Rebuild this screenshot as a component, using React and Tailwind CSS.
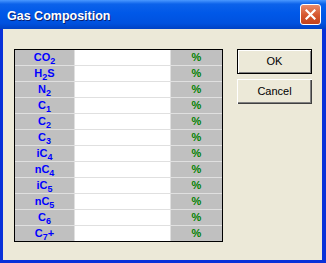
const rows = [
  { base: 'CO', sub: '2' },
  { base: 'H', sub: '2', tail: 'S' },
  { base: 'N', sub: '2' },
  { base: 'C', sub: '1' },
  { base: 'C', sub: '2' },
  { base: 'C', sub: '3' },
  { base: 'iC', sub: '4' },
  { base: 'nC', sub: '4' },
  { base: 'iC', sub: '5' },
  { base: 'nC', sub: '5' },
  { base: 'C', sub: '6' },
  { base: 'C', sub: '7', tail: '+' },
];

function Label({ base, sub, tail }) {
  return (
    <span className="text-[11px] font-bold leading-none text-[#0000ff]">
      {base}
      <sub className="text-[9px] bottom-[-3px]">{sub}</sub>
      {tail}
    </span>
  );
}

export default function App() {
  return (
    <div className="flex h-[263px] w-[326px] flex-col font-['Liberation_Sans',Arial,sans-serif]">
      <div className="flex h-[29px] shrink-0 items-center justify-between bg-[linear-gradient(to_bottom,#4a98ff_0%,#0c62ea_14%,#0058e8_45%,#0052df_80%,#0042c4_100%)] pl-[7px] pr-[5px]">
        <span className="pt-[3px] text-[12.5px] font-bold text-white [text-shadow:1px_1px_0_#0a1e6e]">
          Gas Composition
        </span>
        <button className="flex h-[21px] w-[21px] items-center justify-center rounded-[3px] border border-white bg-[linear-gradient(to_bottom,#e98a6a,#d5562e_55%,#c2421c)]">
          <svg width="11" height="11" viewBox="0 0 11 11">
            <path d="M1.5 1.5 L9.5 9.5 M9.5 1.5 L1.5 9.5" stroke="white" strokeWidth="2.2" strokeLinecap="square" />
          </svg>
        </button>
      </div>
      <div className="flex flex-1 items-start gap-[14px] border-x-[3px] border-b-[3px] border-[#0831d9] border-r-[4px] bg-[#ece9d8] pl-[11px] pt-[20px]">
        <div className="grid grid-cols-[59px_95px_51px] gap-px border border-black bg-[#e0e0e0]">
          {rows.map((r, i) => (
            <div key={i} className="contents">
              <div className="flex h-[15px] items-start justify-center bg-[#c0c0c0] pt-[2px]">
                <Label {...r} />
              </div>
              <div className="h-[15px] bg-white" />
              <div className="flex h-[15px] items-center justify-center bg-[#c0c0c0] text-[11px] font-bold text-[#008000]">
                %
              </div>
            </div>
          ))}
        </div>
        <div className="flex flex-col gap-[5px]">
          <button className="h-[25px] w-[75px] border border-black bg-[#ece9d8] text-[11px] text-black shadow-[inset_1px_1px_0_#fff,inset_-1px_-1px_0_#808080]">
            OK
          </button>
          <button className="h-[25px] w-[75px] bg-[#ece9d8] text-[11px] text-black shadow-[inset_1px_1px_0_#fff,inset_-1px_-1px_0_#404040,inset_-2px_-2px_0_#808080]">
            Cancel
          </button>
        </div>
      </div>
    </div>
  );
}
